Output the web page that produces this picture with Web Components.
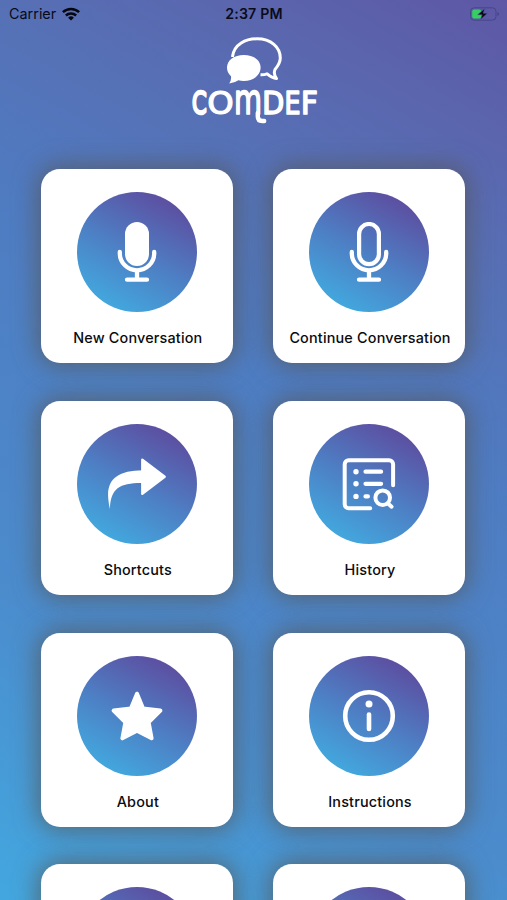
<!DOCTYPE html>
<html lang="en">
<head>
<meta charset="utf-8">
<title>COMDEF</title>
<style>
  html, body { margin: 0; height: 100%; overflow: hidden; }
  body { font-family: Inter, "Liberation Sans", sans-serif; color: #0b0b0f; }
</style>
</head>
<body>
<home-screen>
  <status-bar slot="status" carrier="Carrier" time="2:37 PM"></status-bar>
  <brand-logo slot="logo"></brand-logo>
  <menu-card icon="mic-fill">New Conversation</menu-card>
  <menu-card icon="mic">Continue Conversation</menu-card>
  <menu-card icon="share">Shortcuts</menu-card>
  <menu-card icon="history">History</menu-card>
  <menu-card icon="star">About</menu-card>
  <menu-card icon="info">Instructions</menu-card>
  <menu-card></menu-card>
  <menu-card></menu-card>
</home-screen>

<script>
const MIC_STAND = `
  <path d="M-17.2 0v1.3a17.2 17 0 0 0 34.4 0V0M0 18.5v9.2M-10 27.7h20" stroke-width="4.3"/>`;

// 60x60 box, origin in the middle
const ICONS = {
  'mic-fill': `
    <rect x="-12" y="-30" width="24" height="44" rx="12" fill="#fff" stroke="none"/>${MIC_STAND}`,
  mic: `
    <rect x="-9.9" y="-28" width="19.8" height="40.2" rx="9.9" stroke-width="4.2"/>${MIC_STAND}`,
  share: `
    <path d="M5.300-24.200L27.700-7.200L5.300 9.800Z" fill="#fff" stroke-width="2.400"/>
    <path d="M6-13.700C-20-13.500-31-4-28.600 16Q-28.200 21-27 25C-26.500 4-17-1.300 6-1Z" fill="#fff" stroke="none"/>`,
  history: `
    <path d="M24.1 1.3V-19.700a4 4 0 0 0-4-4h-40.400a4 4 0 0 0-4 4v40a4 4 0 0 0 4 4H1.200" stroke-width="4"/>
    <path d="M-3.500-12.300h15.600M-3.500-.2h15.600M-3.500 12.4h2.400" stroke-width="4.2"/>
    <path d="M-13-12.3h.01M-13-.2h.01M-13 12.4h.01" stroke-width="5.4"/>
    <circle cx="13.700" cy="13.700" r="7.300" stroke-width="4"/>
    <path d="M19 19.600L22.600 22.700" stroke-width="4"/>`,
  star: `
    <path d="M0-22.300L6.100-7.400L23.400-5.400L11.600 6.200L14.600 22.300L0 14.700L-14.600 22.300L-11.600 6.200L-23.400-5.400L-6.100-7.400Z" fill="#fff" stroke-width="4"/>`,
  info: `
    <circle r="23.800" stroke-width="4.600"/>
    <circle cy="-12" r="3.500" fill="#fff" stroke="none"/>
    <path d="M0-1.400V13" stroke-width="4.600"/>`,
};

class HomeScreen extends HTMLElement {
  constructor() {
    super();
    this.attachShadow({ mode: 'open' }).innerHTML = `
      <style>
        :host {
          display: flex;
          flex-direction: column;
          height: 100%;
          overflow: hidden;
          background: linear-gradient(209deg, #5e57a5 0%, #5a67af 14%, #5671b6 25%, #4f7bc1 40%, #4b8ccd 74%, #43a7df 100%);
        }
        header {
          display: flex;
          flex-direction: column;
          align-items: center;
          flex: none;
          height: 169.3px;
        }
        main {
          display: grid;
          grid-template-columns: repeat(2, 192.2px);
          grid-auto-rows: 194px;
          gap: 37.7px 40px;
          padding-left: 41px;
        }
      </style>
      <header>
        <slot name="status"></slot>
        <slot name="logo"></slot>
      </header>
      <main><slot></slot></main>
    `;
  }
}

class StatusBar extends HTMLElement {
  constructor() {
    super();
    this.attachShadow({ mode: 'open' });
  }

  connectedCallback() {
    this.shadowRoot.innerHTML = `
      <style>
        :host {
          display: grid;
          grid-template-columns: 1fr auto 1fr;
          align-items: center;
          align-self: stretch;
          height: 27px;
          padding: 0 8px 0 9px;
          font-size: 14.4px;
          line-height: 27px;
          color: #0a0b1a;
        }
        .carrier { display: flex; align-items: center; gap: 6px; }
        .time { font-weight: 600; font-size: 14.2px; letter-spacing: .15px; }
        .battery { justify-self: end; }
        svg { display: block; }
      </style>
      <div class="carrier">
        <span>${this.getAttribute('carrier')}</span>
        <svg width="18" height="14" viewBox="0 0 18 14" fill="none" stroke="#05060f" stroke-width="2.5">
          <path d="M.9 5.2a11.6 11.6 0 0 1 16.2 0M3.9 8.5a7.3 7.3 0 0 1 10.2 0"/>
          <path d="M9 13.6L6.1 10.7a4.2 4.2 0 0 1 5.8 0Z" fill="#05060f" stroke="none"/>
        </svg>
      </div>
      <div class="time">${this.getAttribute('time')}</div>
      <svg class="battery" width="30" height="14" viewBox="0 0 30 14">
        <rect x="1.5" y=".8" width="25.5" height="12.4" rx="3.6" fill="none" stroke="#45478a" stroke-width="1"/>
        <path d="M28.4 5v4q1.6-.6 1.6-2t-1.6-2Z" fill="#45478a"/>
        <rect x="3.200" y="2.500" width="9" height="9" rx="2" fill="#35cf62"/>
        <path d="M15.800 1.600L8.600 7.800h4.600L11.600 12.600L18.400 6.200h-4.200Z" fill="#05060f" stroke="#5a5fa9" stroke-width=".5"/>
      </svg>
    `;
  }
}

class BrandLogo extends HTMLElement {
  constructor() {
    super();
    this.attachShadow({ mode: 'open' }).innerHTML = `
      <style>
        :host { display: block; margin-top: 8px; }
        svg { display: block; }
        text {
          font: 32px "DejaVu Sans", sans-serif;
          fill: #fff;
          stroke: #fff;
          stroke-width: 1.7;
          stroke-linejoin: round;
        }
        .c { stroke-width: 2.5; }
        .o { stroke-width: 1.2; }
        .m { font-size: 42px; text-transform: lowercase; }
      </style>
      <svg width="130" height="92" viewBox="189 35 130 92" fill="none">
        <path d="M232.4 57C234 44 246 38.800 257 38.800C271 38.800 280.300 47 280.300 58C280.300 63 277.500 66.500 275 69.500C273.500 73 275 76.500 276.500 78.600C272 78.300 269.500 76 267 73.800Q264 75 260.500 74.800" stroke="#fff" stroke-width="3" stroke-linejoin="round"/>
        <path d="M243.800 54.900C253.400 54.900 260.600 60 260.600 67.500C260.600 75.500 253 81 243.800 81Q240.800 81 238.400 80.200Q234.800 82.800 229.200 83.600Q231.600 80 231 76.300Q227 72.800 227 67.500C227 60 234.200 54.900 243.800 54.900Z" fill="#fff"/>
        <text y="114.3"><tspan class="c" x="191.9" textLength="14.800" lengthAdjust="spacingAndGlyphs">C</tspan><tspan class="o" x="207.200" textLength="26.500" lengthAdjust="spacingAndGlyphs">O</tspan><tspan class="m" x="234" textLength="28" lengthAdjust="spacingAndGlyphs">M</tspan><tspan x="262.300" textLength="22" lengthAdjust="spacingAndGlyphs">D</tspan><tspan x="284.600" textLength="16" lengthAdjust="spacingAndGlyphs">E</tspan><tspan x="301" textLength="16.800" lengthAdjust="spacingAndGlyphs">F</tspan></text>
        <path d="M257.800 113v3.500q0 4.500 4.500 4.500h1.900" stroke="#fff" stroke-width="4.400" stroke-linecap="round"/>
      </svg>
    `;
  }
}

class MenuCard extends HTMLElement {
  constructor() {
    super();
    this.attachShadow({ mode: 'open' });
  }

  connectedCallback() {
    this.shadowRoot.innerHTML = `
      <style>
        :host {
          display: flex;
          flex-direction: column;
          align-items: center;
          box-sizing: border-box;
          padding-top: 23px;
          border-radius: 19px;
          background: #fff;
          box-shadow: 0 0 24px 3px rgba(85, 85, 85, .75);
        }
        .disc {
          display: grid;
          place-items: center;
          width: 120px;
          height: 120px;
          border-radius: 50%;
          background: linear-gradient(209deg, #5c50a2 14%, #4d80c5 53%, #42a8de 88%);
        }
        .label {
          margin-top: 15px;
          padding-left: 1.5px;
          font-size: 14.4px;
          font-weight: 500;
          line-height: 22px;
          letter-spacing: .18px;
          white-space: nowrap;
        }
      </style>
      <div class="disc">
        <svg width="60" height="60" viewBox="-30 -30 60 60" fill="none" stroke="#fff" stroke-linecap="round" stroke-linejoin="round">
          ${ICONS[this.getAttribute('icon')] || ''}
        </svg>
      </div>
      <div class="label"><slot></slot></div>
    `;
  }
}

customElements.define('home-screen', HomeScreen);
customElements.define('status-bar', StatusBar);
customElements.define('brand-logo', BrandLogo);
customElements.define('menu-card', MenuCard);
</script>
</body>
</html>
